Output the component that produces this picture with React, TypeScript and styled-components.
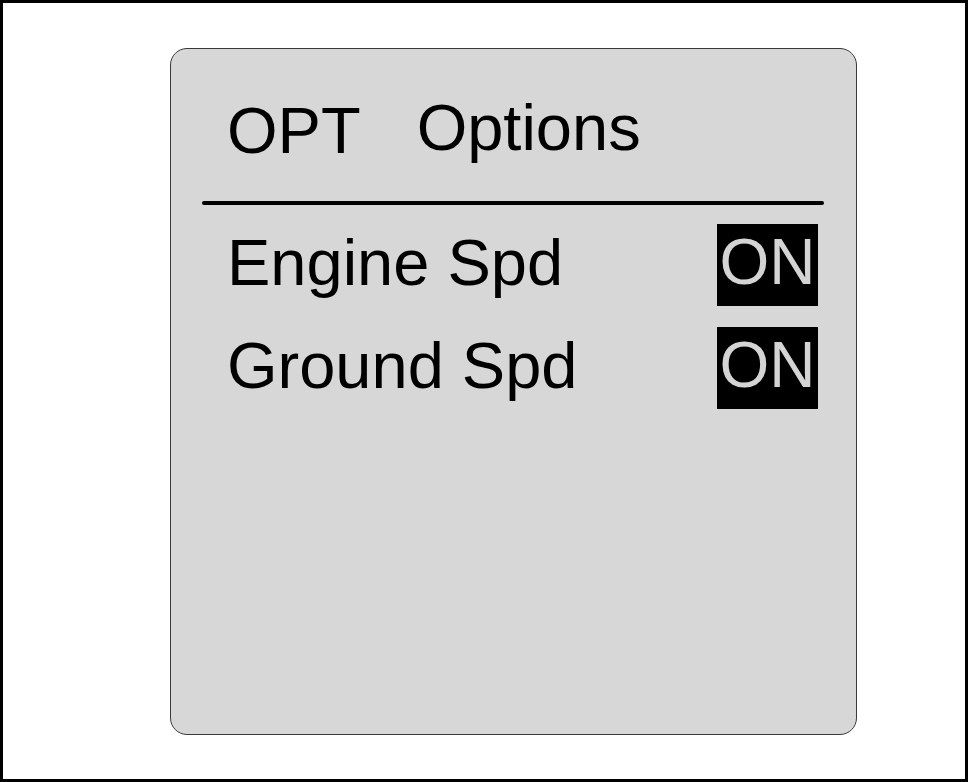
import React from "react";
import styled, { createGlobalStyle } from "styled-components";

const Global = createGlobalStyle`
  html, body { margin: 0; padding: 0; background: #ffffff; }
  * { box-sizing: border-box; }
`;

const Frame = styled.div`
  width: 968px;
  height: 782px;
  border: 3px solid #000;
  background: #fff;
  padding: 45px 0 0 167px;
  font-family: "Liberation Sans", Arial, sans-serif;
`;

const Panel = styled.div`
  width: 687px;
  height: 687px;
  background: #d7d7d7;
  border: 1px solid #3a3a3a;
  border-radius: 17px;
  padding-top: 46px;
  display: flex;
  flex-direction: column;
`;

const Header = styled.div`
  display: flex;
  align-items: flex-start;
  padding-left: 56px;
  height: 77px;
  color: #000;
  font-size: 65px;
  line-height: 65px;
`;

const Code = styled.span<{ $drop: number }>`
  margin-top: ${(p) => p.$drop}px;
`;

const Title = styled.span`
  margin-left: 56px;
`;

const Rule = styled.div`
  height: 4px;
  margin: 29px 32px 19px 31px;
  background: #000;
  border-radius: 2px;
`;

const List = styled.div`
  display: flex;
  flex-direction: column;
  gap: 21px;
  padding: 0 38px 0 56px;
`;

const Row = styled.div`
  display: flex;
  align-items: flex-start;
  justify-content: space-between;
  height: 82px;
`;

const Label = styled.span`
  font-size: 65px;
  line-height: 65px;
  padding-top: 6px;
  color: #000;
`;

const Badge = styled.span<{ $on: boolean }>`
  width: 101px;
  height: 82px;
  background: ${(p) => (p.$on ? "#000" : "transparent")};
  color: ${(p) => (p.$on ? "#d4d4d4" : "#000")};
  font-size: 64px;
  line-height: 77px;
  text-align: center;
`;

const options = [
  { label: "Engine Spd", on: true },
  { label: "Ground Spd", on: true },
];

export default function App() {
  return (
    <>
      <Global />
      <Frame>
        <Panel>
          <Header>
            <Code $drop={3}>OPT</Code>
            <Title>Options</Title>
          </Header>
          <Rule />
          <List>
            {options.map((o) => (
              <Row key={o.label}>
                <Label>{o.label}</Label>
                <Badge $on={o.on}>{o.on ? "ON" : "OFF"}</Badge>
              </Row>
            ))}
          </List>
        </Panel>
      </Frame>
    </>
  );
}
